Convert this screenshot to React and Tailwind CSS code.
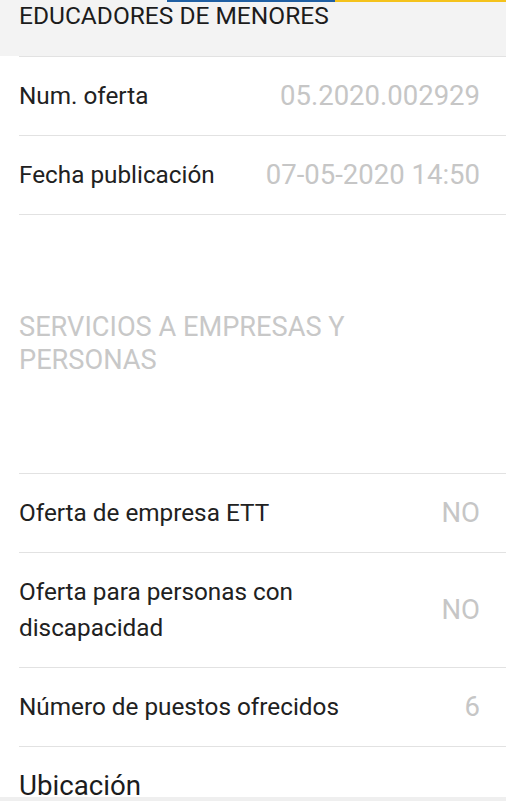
import React from 'react';

// --- DATA ---
const topRows = [
  { label: 'Num. oferta', value: '05.2020.002929' },
  { label: 'Fecha publicación', value: '07-05-2020 14:50' },
];

const bottomRows = [
  { label: 'Oferta de empresa ETT', value: 'NO' },
  { label: 'Oferta para personas con discapacidad', value: 'NO' },
  { label: 'Número de puestos ofrecidos', value: '6' },
];

const Row = ({ label, value }) => (
  <div className="border-t border-[#e2e2e2] pr-[26px] py-[21px] flex items-center justify-between gap-6">
    <span className="text-[24.3px] leading-[36px] text-[#212121]">{label}</span>
    <span className="text-[27.5px] leading-[36px] text-[#c6c6c6] text-right shrink-0">{value}</span>
  </div>
);

const App = () => {
  return (
    <div className="w-[506px] h-[801px] overflow-hidden bg-white flex flex-col font-['Roboto',sans-serif]">
      <main className="flex-1 overflow-hidden">
        {/* header */}
        <header className="bg-[#f3f3f3] h-[56px]">
          <div className="flex h-[2px]">
            <div className="w-[167px]" />
            <div className="w-[168px] bg-[#1f5fa3]" />
            <div className="flex-1 bg-[#f4c21b]" />
          </div>
          <h1 className="pl-[19px] text-[24.5px] leading-[28px] text-[#1c1c1c]">EDUCADORES DE MENORES</h1>
        </header>

        <div className="ml-[19px]">
          {topRows.map((r) => <Row key={r.label} {...r} />)}

          <div className="border-t border-[#e2e2e2] h-[259px] flex items-center pr-[60px]">
            <p className="text-[27.2px] leading-[33px] text-[#c8c8c8]">SERVICIOS A EMPRESAS Y PERSONAS</p>
          </div>

          {bottomRows.map((r) => <Row key={r.label} {...r} />)}

          <div className="border-t border-[#e2e2e2] pt-[21px]">
            <h2 className="text-[27.7px] leading-[36px] text-[#1c1c1c]">Ubicación</h2>
            <div className="h-[60px]" />
          </div>
        </div>
      </main>
      <div className="h-[4px] bg-[#efefef]" />
    </div>
  );
};

export default App;
